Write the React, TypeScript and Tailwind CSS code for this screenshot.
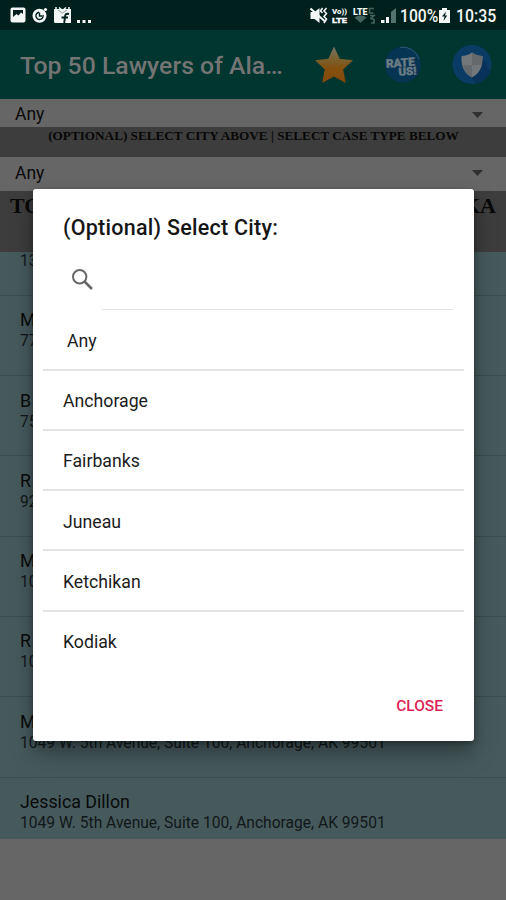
// Lawyer directory screen with the city picker dialog open

const CITIES = ['Anchorage', 'Fairbanks', 'Juneau', 'Ketchikan', 'Kodiak']

const LAWYERS = [
  { name: '', address: '13' },
  { name: 'M', address: '77' },
  { name: 'B', address: '75' },
  { name: 'R', address: '92' },
  { name: 'M', address: '10' },
  { name: 'R', address: '10' },
  { name: 'M', address: '1049 W. 5th Avenue, Suite 100, Anchorage, AK 99501' },
  { name: 'Jessica Dillon', address: '1049 W. 5th Avenue, Suite 100, Anchorage, AK 99501' },
]

function StatusBar() {
  return (
    <div className="flex h-[30px] items-center bg-[#00201d] px-[10px] text-[#f3f7f6]">
      <svg width="84" height="30" viewBox="0 0 84 30" className="shrink-0">
        {/* gallery */}
        <rect x="0.5" y="7.500" width="15" height="15" rx="2" fill="#f3f7f6" />
        <path d="M3 10h10v4l-2-1.500-2.500 3-2-1.500L3 17z" fill="#00201d" />
        {/* sync badge */}
        <circle cx="29.500" cy="15.800" r="7" fill="#f3f7f6" />
        <circle cx="35.500" cy="9.500" r="1.600" fill="#f3f7f6" />
        <path d="M33 15a3.600 3.600 0 1 1-4-2.700M29.500 12.500v3.500h2.500" fill="none" stroke="#00201d" strokeWidth="1.400" />
        {/* calendar */}
        <path d="M44 9h17v14H45.500a1.500 1.500 0 0 1-1.500-1.500z" fill="#f3f7f6" />
        <path d="M46 7v3M49 7.500l3.500 3 3.500-3M59 7v3" stroke="#f3f7f6" strokeWidth="1.500" fill="none" />
        <path d="M48 10l4.500 3 4.500-3" stroke="#8b9c9a" strokeWidth="1" fill="none" />
        <path d="M59 14c-3-.8-4 .5-4 3l-.8 6M51.500 17.500h6.500" fill="none" stroke="#00201d" strokeWidth="1.900" />
        <path d="M67 20h3v3h-3zM72.500 20h3v3h-3zM78 20h3v3h-3z" fill="#f3f7f6" />
      </svg>
      <div className="flex-1" />
      <svg width="90" height="30" viewBox="0 0 90 30" className="shrink-0" fontFamily="Roboto, sans-serif" fontWeight="900">
        {/* muted speaker with vibration */}
        <path d="M.500 12h4l5-4v15l-5-4h-4z" fill="#f3f7f6" />
        <path d="M.500 8.500l14 12.500" stroke="#f3f7f6" strokeWidth="2" />
        <path d="M12.500 8l-2 3 2 2M16.500 8l-2.500 3 2.500 2.500-2.500 3 2.500 2.500-2.500 4" stroke="#f3f7f6" strokeWidth="1.600" fill="none" />
        <text x="22" y="14" fontSize="7.500" textLength="15" lengthAdjust="spacingAndGlyphs" fill="#f3f7f6">Vo))</text>
        <text x="22" y="23" fontSize="7.500" textLength="15" lengthAdjust="spacingAndGlyphs" stroke="#f3f7f6" strokeWidth="0.300" fill="#f3f7f6">LTE</text>
        <text x="43" y="14.500" fontSize="9" textLength="14.500" lengthAdjust="spacingAndGlyphs" fill="#f3f7f6">LTE</text>
        <path d="M44.500 17.500c3-2.700 9-2.700 12 0l-6 5.500z" fill="#45645f" />
        <path d="M64 8.500h-4.500v4.500h4M60 15.500h4l-3 3 3 1v3.500h-3" stroke="#45645f" strokeWidth="1.600" fill="none" />
        <path d="M71 20h3.500v3H71zM76 17h3v6h-3z" fill="#f3f7f6" />
        <path d="M81 12l5-4v15h-5z" fill="#52736f" />
      </svg>
      <span className="w-[39px] text-[18px] leading-[30px]">
        <span className="block origin-left scale-x-[0.87] pt-0.5 font-medium">100%</span>
      </span>
      <svg width="11" height="30" viewBox="0 0 11 30" className="shrink-0">
        <path d="M3 8h5v2h3v13H0V10h3z" fill="#f3f7f6" />
        <path d="M7 11.500L3 16.500h2.500L4.500 21l3.700-5.500H6z" fill="#00201d" />
      </svg>
      <span className="w-[46px] pl-[6px] text-[18px] leading-[30px]">
        <span className="block origin-left scale-x-[0.88] pt-0.5 font-medium">10:35</span>
      </span>
    </div>
  )
}

function StarIcon() {
  return (
    <svg width="40" height="40" viewBox="0 0 40 40">
      <defs>
        <linearGradient id="star" x1="0" y1="0" x2="0" y2="1">
          <stop offset="0" stopColor="#77736a" />
          <stop offset="0.350" stopColor="#7b602e" />
          <stop offset="0.600" stopColor="#84500d" />
          <stop offset="1" stopColor="#86480b" />
        </linearGradient>
      </defs>
      <path d="M20 1.500l5.700 12.300 13.300 1.400-9.800 9.300 2.600 13.500L20 31.500 8.200 38l2.600-13.500L1 15.200l13.300-1.400z" fill="url(#star)" />
    </svg>
  )
}

function RateIcon() {
  return (
    <svg width="40" height="40" viewBox="0 0 40 40" fontFamily="Roboto, sans-serif" fontWeight="900">
      <circle cx="20" cy="19.500" r="18" fill="#063453" />
      <path d="M17 2.300A17 17 0 0 1 36 14" fill="none" stroke="#315a70" strokeWidth="1" />
      <g transform="rotate(-4 20 20)" fill="#6c7c84" stroke="#6c7c84" strokeWidth="0.400">
        <text x="3" y="21.500" fontSize="11.500" textLength="29" lengthAdjust="spacingAndGlyphs">RATE</text>
        <text x="15" y="30.500" fontSize="11" textLength="18" lengthAdjust="spacingAndGlyphs">US!</text>
      </g>
    </svg>
  )
}

function ShieldIcon() {
  return (
    <svg width="40" height="40" viewBox="0 0 40 40">
      <circle cx="20" cy="19.500" r="19.500" fill="#093b65" />
      <path d="M10 12l9 20 5 6.500c7-1.500 12-6 14-12L30.500 12z" fill="#08325a" />
      <path d="M20 7.500c3 2.500 6.500 3.300 10.500 3.500.5 10-2.500 17.500-10.500 21.500C12 28.500 9 21 9.500 11 13.500 10.800 17 10 20 7.500z" fill="#73777a" />
      <path d="M20 7.500c3 2.500 6.500 3.300 10.500 3.500.1 3.400-.2 6.500-1 9H20zM20 20H10.700C12 25.500 15 30 20 32.500z" fill="#65696b" />
    </svg>
  )
}

function AppBar() {
  return (
    <header className="flex h-[69px] items-center bg-[#003530] pl-5">
      <h1 className="w-[294px] whitespace-nowrap pt-[3px] text-[24.800px] font-medium text-[#747474]">Top 50 Lawyers of Ala…</h1>
      <div className="flex gap-[29px]">
        <StarIcon />
        <RateIcon />
        <ShieldIcon />
      </div>
    </header>
  )
}

function Spinner({ className }: { className: string }) {
  return (
    <div className={`flex items-center justify-between bg-[#666666] pl-[15px] pr-[23px] text-[17.500px] text-[#090909] ${className}`}>
      <span>Any</span>
      <svg width="11" height="6" viewBox="0 0 11 6"><path d="M0 0h11L5.500 6z" fill="#303030" /></svg>
    </div>
  )
}

function LawyerList() {
  return (
    <ul className="h-[587px] overflow-hidden bg-[#465a5c]">
      {LAWYERS.map((l, i) => (
        <li key={i} className="h-[80.300px] border-b border-[#3c4e50] pl-5 pt-[12.500px] first:-mt-[36.500px]">
          <p className="h-[23px] text-[17.800px] leading-[23px] text-[#080a0a]">{l.name}</p>
          <p className="text-[15.600px] leading-[21px] text-[#111718]">{l.address}</p>
        </li>
      ))}
    </ul>
  )
}

function CityDialog() {
  return (
    <div className="absolute left-[33px] top-[189px] flex h-[552px] w-[441px] flex-col rounded-[3px] bg-white shadow-[0_12px_22px_rgba(0,0,0,0.350),0_2px_5px_rgba(0,0,0,0.300)]">
      <h2 className="pl-[30px] pt-[25px] text-[21.500px] font-medium leading-[28px] tracking-[0.260px] text-[#161616]">(Optional) Select City:</h2>
      <div className="flex h-[68px] pl-[38px] pr-[21px]">
        <svg width="23" height="23" viewBox="0 0 23 23" className="mt-[26px] shrink-0" fill="none" stroke="#686868">
          <circle cx="8.700" cy="8.700" r="6.700" strokeWidth="2" />
          <path d="M13.500 13.500l7.500 7.500" strokeWidth="2.600" />
        </svg>
        <div className="ml-2 flex-1 border-b border-[#e4e4e4]" />
      </div>
      <ul className="mx-[10px] text-[17.700px] text-[#1c1c1c]">
        <li className="flex h-[60.600px] items-center border-b-2 border-[#e4e4e4] pl-6 pt-[4px]">Any</li>
        {CITIES.map(city => (
          <li key={city} className="flex h-[60.300px] items-center border-b-2 border-[#e4e4e4] pl-5 pt-[3px] last:border-b-0 last:pt-px">{city}</li>
        ))}
      </ul>
      <button className="mr-[31px] mt-[22px] self-end text-[15.500px] font-medium leading-[24px] text-[#dc1f55]">CLOSE</button>
    </div>
  )
}

export default function App() {
  return (
    <div className="relative h-[900px] overflow-hidden bg-[#666666] font-['Roboto',sans-serif]">
      <StatusBar />
      <AppBar />
      <Spinner className="h-[28px] pt-[3px]" />
      <div className="h-[30px] whitespace-nowrap bg-[#3d3d3d] pl-px text-center font-['Liberation_Serif',serif] text-[13.200px] font-bold leading-[18px] text-[#080808]">
        (OPTIONAL) SELECT CITY ABOVE | SELECT CASE TYPE BELOW
      </div>
      <Spinner className="h-[34px] pb-[2px]" />
      <div className="flex h-[61px] justify-between bg-[#3d3d3d] px-[10px] pt-[2px] font-['Liberation_Serif',serif] text-[22px] font-bold leading-[26px] text-[#080808]">
        <span>TOP 50 LAWYERS</span>
        <span>IN ALASKA</span>
      </div>
      <LawyerList />
      <CityDialog />
    </div>
  )
}
